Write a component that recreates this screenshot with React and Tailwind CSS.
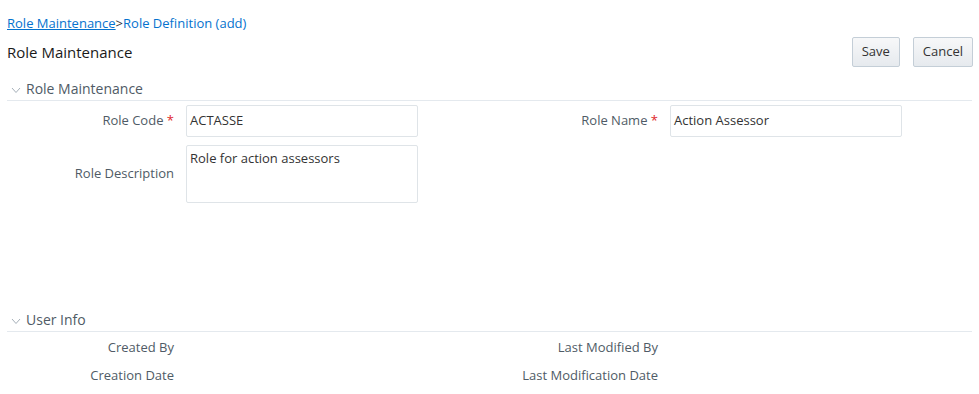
import React from 'react';

const font = { fontFamily: '"Open Sans", "Noto Sans", sans-serif' };

const Chevron = () => (
  <svg width="10" height="7" viewBox="0 0 10 7" className="ml-[4px] mr-[5px] mt-[3px] shrink-0">
    <path d="M1 1 L5 5.5 L9 1" fill="none" stroke="#a6b0b9" strokeWidth="1" />
  </svg>
);

const SectionHeader = ({ title }) => (
  <div className="mx-[7px] flex items-center border-b border-[#e4e9ee] h-[23px]">
    <Chevron />
    <span className="text-[14px] text-[#4f5b66] leading-none">{title}</span>
  </div>
);

const Label = ({ text, required }) => (
  <div className="w-[186px] pr-[12px] text-right text-[13px] text-[#4f5b66] shrink-0">
    {text}
    {required && <span className="text-[#e0262b]"> *</span>}
  </div>
);

const Field = ({ value }) => (
  <div className="w-[232px] h-[32px] shrink-0 border border-[#dfe4e8] rounded-[2px] px-[3px] flex items-center text-[13px] text-[#333333] bg-white">
    {value}
  </div>
);

const App = () => {
  return (
    <div className="w-[979px] h-[394px] bg-white overflow-hidden" style={font}>
      {/* Breadcrumb */}
      <div className="pt-[14px] px-[7px] text-[13px] leading-[18px] text-[#0572ce]">
        <span className="underline">Role Maintenance</span>
        <span className="text-[#333333]">&gt;</span>
        <span>Role Definition (add)</span>
      </div>

      {/* Title bar */}
      <div className="flex items-center justify-between pl-[7px] pr-[6px] mt-[5px] h-[30px]">
        <div className="text-[15px] text-[#1a1a1a]">Role Maintenance</div>
        <div className="flex gap-[13px]">
          <button className="h-[30px] px-[9px] text-[13px] text-[#333333] border border-[#c4ced7] rounded-[2px] bg-gradient-to-b from-[#f7f8f9] to-[#e6eaee]">
            Save
          </button>
          <button className="h-[30px] px-[9px] text-[13px] text-[#333333] border border-[#c4ced7] rounded-[2px] bg-gradient-to-b from-[#f7f8f9] to-[#e6eaee]">
            Cancel
          </button>
        </div>
      </div>

      {/* Role Maintenance section */}
      <div className="mt-[11px]">
        <SectionHeader title="Role Maintenance" />
        <div className="mt-[4px] flex flex-col gap-[8px]">
          <div className="flex items-center">
            <div className="w-[484px] flex items-center shrink-0">
              <Label text="Role Code" required />
              <Field value="ACTASSE" />
            </div>
            <div className="flex items-center">
              <Label text="Role Name" required />
              <Field value="Action Assessor" />
            </div>
          </div>
          <div className="flex">
            <div className="w-[186px] pr-[12px] shrink-0 flex items-center justify-end text-[13px] text-[#4f5b66]">
              Role Description
            </div>
            <div className="w-[232px] h-[58px] shrink-0 border border-[#dfe4e8] rounded-[2px] px-[3px] pt-[3px] text-[13px] text-[#333333]">
              Role for action assessors
            </div>
          </div>
        </div>
      </div>

      {/* User Info section */}
      <div className="mt-[106px]">
        <SectionHeader title="User Info" />
        <div className="mt-[7px] flex flex-col gap-[10px] text-[13px] text-[#4f5b66]">
          <div className="flex h-[18px] items-center">
            <div className="w-[174px] text-right">Created By</div>
            <div className="w-[484px] text-right">Last Modified By</div>
          </div>
          <div className="flex h-[18px] items-center">
            <div className="w-[174px] text-right">Creation Date</div>
            <div className="w-[484px] text-right">Last Modification Date</div>
          </div>
        </div>
      </div>
    </div>
  );
};

export default App;
